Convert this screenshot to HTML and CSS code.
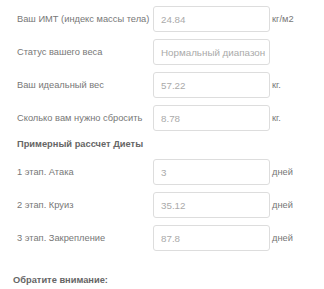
FILE: index.html
```html
<!doctype html>
<html lang="ru">
  <head>
    <meta charset="UTF-8" />
    <title>Калькулятор ИМТ</title>
    <link rel="stylesheet" href="styles.css">
  </head>
  <body>
    <div class="calc">
      <div class="row">
        <label>Ваш ИМТ (индекс массы тела)</label>
        <input type="text" value="24.84" readonly />
        <span class="unit">кг/м2</span>
      </div>
      <div class="row">
        <label>Статус вашего веса</label>
        <input type="text" value="Нормальный диапазон" readonly />
      </div>
      <div class="row">
        <label>Ваш идеальный вес</label>
        <input type="text" value="57.22" readonly />
        <span class="unit">кг.</span>
      </div>
      <div class="row">
        <label>Сколько вам нужно сбросить</label>
        <input type="text" value="8.78" readonly />
        <span class="unit">кг.</span>
      </div>

      <h3 class="section">Примерный рассчет Диеты</h3>

      <div class="row">
        <label>1 этап. Атака</label>
        <input type="text" value="3" readonly />
        <span class="unit">дней</span>
      </div>
      <div class="row">
        <label>2 этап. Круиз</label>
        <input type="text" value="35.12" readonly />
        <span class="unit">дней</span>
      </div>
      <div class="row">
        <label>3 этап. Закрепление</label>
        <input type="text" value="87.8" readonly />
        <span class="unit">дней</span>
      </div>
    </div>

    <p class="note">Обратите внимание:</p>
  </body>
</html>
```

FILE: styles.css
```css
body {
  font-family: 'Liberation Sans', Arial, sans-serif;
  font-size: 9.3px;
  margin: 0;
  background-color: #fff;
  color: #777;
}

.calc {
  padding: 6px 0 0 17px;
}

.row {
  display: flex;
  align-items: center;
  height: 26px;
  margin-bottom: 7px;
  white-space: nowrap;
}

.row label {
  width: 136px;
}

.row input {
  box-sizing: border-box;
  width: 117px;
  height: 26px;
  padding: 0 3px 0 7px;
  border: 1px solid #ddd;
  border-radius: 3px;
  font-family: inherit;
  font-size: 9.8px;
  color: #aaa;
  background-color: #fff;
}

.unit {
  margin-left: 2px;
}

.section {
  margin: -1px 0 8px;
  font-size: 9.3px;
  font-weight: bold;
  color: #666;
  line-height: 14px;
}

.note {
  margin: 24px 0 0 13px;
  font-size: 9.3px;
  font-weight: bold;
  color: #666;
}
```
